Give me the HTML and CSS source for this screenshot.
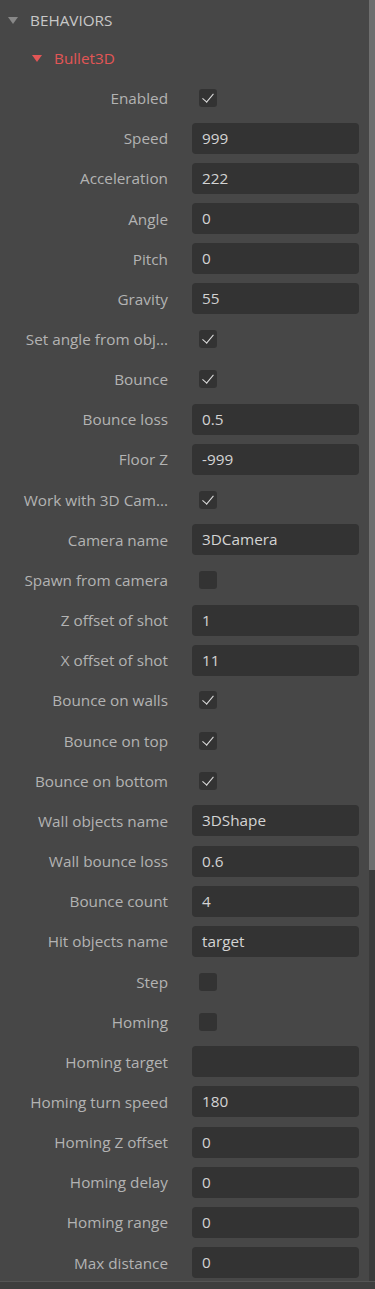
FILE: index.html
```html
<!DOCTYPE html>
<html lang="en">

<head>
  <meta charset="UTF-8" />
  <meta name="viewport" content="width=device-width, initial-scale=1.0" />
  <title>Behaviors</title>
  <link rel="stylesheet" href="styles.css">
</head>

<body>

  <div class="panel">
    <div class="content">
      <div class="section-head">
        <span class="arrow gray"></span>
        <span>BEHAVIORS</span>
      </div>
      <div class="behavior-head">
        <span class="arrow red"></span>
        <span>Bullet3D</span>
      </div>

      <div class="props">
        <div class="row"><label>Enabled</label><span class="check on"></span></div>
        <div class="row"><label>Speed</label><span class="field">999</span></div>
        <div class="row"><label>Acceleration</label><span class="field">222</span></div>
        <div class="row"><label>Angle</label><span class="field">0</span></div>
        <div class="row"><label>Pitch</label><span class="field">0</span></div>
        <div class="row"><label>Gravity</label><span class="field">55</span></div>
        <div class="row"><label>Set angle from obj...</label><span class="check on"></span></div>
        <div class="row"><label>Bounce</label><span class="check on"></span></div>
        <div class="row"><label>Bounce loss</label><span class="field">0.5</span></div>
        <div class="row"><label>Floor Z</label><span class="field">-999</span></div>
        <div class="row"><label>Work with 3D Cam...</label><span class="check on"></span></div>
        <div class="row"><label>Camera name</label><span class="field">3DCamera</span></div>
        <div class="row"><label>Spawn from camera</label><span class="check"></span></div>
        <div class="row"><label>Z offset of shot</label><span class="field">1</span></div>
        <div class="row"><label>X offset of shot</label><span class="field">11</span></div>
        <div class="row"><label>Bounce on walls</label><span class="check on"></span></div>
        <div class="row"><label>Bounce on top</label><span class="check on"></span></div>
        <div class="row"><label>Bounce on bottom</label><span class="check on"></span></div>
        <div class="row"><label>Wall objects name</label><span class="field">3DShape</span></div>
        <div class="row"><label>Wall bounce loss</label><span class="field">0.6</span></div>
        <div class="row"><label>Bounce count</label><span class="field">4</span></div>
        <div class="row"><label>Hit objects name</label><span class="field">target</span></div>
        <div class="row"><label>Step</label><span class="check"></span></div>
        <div class="row"><label>Homing</label><span class="check"></span></div>
        <div class="row"><label>Homing target</label><span class="field"></span></div>
        <div class="row"><label>Homing turn speed</label><span class="field">180</span></div>
        <div class="row"><label>Homing Z offset</label><span class="field">0</span></div>
        <div class="row"><label>Homing delay</label><span class="field">0</span></div>
        <div class="row"><label>Homing range</label><span class="field">0</span></div>
        <div class="row"><label>Max distance</label><span class="field">0</span></div>
      </div>
    </div>

    <div class="scrollbar">
      <div class="thumb"></div>
    </div>
  </div>

  <div class="footer-line"></div>

</body>

</html>
```

FILE: styles.css
```css
body {
  font-family: 'Open Sans', 'Noto Sans', sans-serif;
  background: #474747;
  margin: 0;
  padding: 0;
  color: #b3b3b3;
  font-size: 15.3px;
}

.panel {
  display: flex;
  height: 1281px;
}

.content {
  flex: 1;
}

.section-head {
  display: flex;
  align-items: center;
  height: 40px;
  padding-left: 8px;
  color: #c8c8c8;
}

.behavior-head {
  display: flex;
  align-items: center;
  height: 36px;
  padding-left: 32px;
  color: #e35656;
}

.arrow {
  width: 0;
  height: 0;
  border-left: 5px solid transparent;
  border-right: 5px solid transparent;
  border-top: 7px solid #888;
  margin-right: 12px;
  margin-top: 1px;
}

.arrow.red {
  border-top-color: #e35656;
}

.props {
  padding-top: 2px;
}

.row {
  display: flex;
  align-items: center;
  height: 40.17px;
}

.row label {
  width: 168px;
  text-align: right;
  padding-right: 24px;
  white-space: nowrap;
}

.field {
  width: 167px;
  height: 31px;
  line-height: 31px;
  background: #333333;
  border-radius: 4px;
  padding-left: 10px;
  box-sizing: border-box;
  color: #d4d4d4;
}

.check {
  width: 18px;
  height: 18px;
  margin-left: 7px;
  background: #333333;
  border-radius: 3px;
  position: relative;
}

.check.on::after {
  content: "";
  position: absolute;
  left: 6px;
  top: 2px;
  width: 5px;
  height: 10px;
  border-right: 1.5px solid #e0e0e0;
  border-bottom: 1.5px solid #e0e0e0;
  transform: rotate(40deg);
}

.scrollbar {
  width: 6px;
  background: #3b3b3b;
}

.thumb {
  height: 870px;
  background: #6e6e6e;
}

.footer-line {
  height: 1px;
  background: #555;
  border-bottom: 7px solid #3e3e3e;
}
```
